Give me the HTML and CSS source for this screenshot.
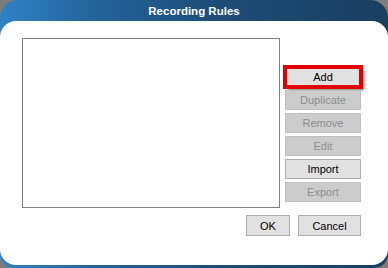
FILE: index.html
```html
<!DOCTYPE html>
<html lang="en">
<head>
    <meta charset="UTF-8">
    <title>Recording Rules</title>
    <link rel="stylesheet" href="styles.css">
</head>
<body>
    <div class="window">
        <div class="title-bar">Recording Rules</div>
        <div class="panel">
            <div class="main-row">
                <div class="rule-list"></div>
                <div class="side-buttons">
                    <button class="btn btn-add">Add</button>
                    <button class="btn" disabled>Duplicate</button>
                    <button class="btn" disabled>Remove</button>
                    <button class="btn" disabled>Edit</button>
                    <button class="btn">Import</button>
                    <button class="btn" disabled>Export</button>
                </div>
            </div>
            <div class="footer">
                <button class="btn btn-ok">OK</button>
                <button class="btn btn-cancel">Cancel</button>
            </div>
        </div>
    </div>
</body>
</html>
```

FILE: styles.css
```css
body {
    margin: 0;
    padding: 0;
    width: 388px;
    height: 268px;
    background: #7c7c7c;
    overflow: hidden;
}
.window {
    width: 388px;
    height: 268px;
    box-sizing: border-box;
    padding-bottom: 3px;
    border-radius: 18px 18px 14px 14px;
    background: linear-gradient(90deg, #2f82c6 0%, #23639a 25%, #1d4d78 55%, #193e60 100%);
    display: flex;
    flex-direction: column;
}
.title-bar {
    height: 21px;
    line-height: 22px;
    text-align: center;
    color: #fff;
    font-family: "Liberation Sans", Arial, sans-serif;
    font-weight: bold;
    font-size: 11.5px;
}
.panel {
    flex: 1;
    background: #fff;
    border-radius: 16px;
    padding: 17px 27px 0 22px;
    font-family: "Liberation Sans", Arial, sans-serif;
    font-size: 11px;
}
.main-row {
    display: flex;
}
.rule-list {
    width: 256px;
    height: 168px;
    border: 1px solid #808080;
    background: #fff;
}
.side-buttons {
    margin-left: 5px;
    padding-top: 29px;
    display: flex;
    flex-direction: column;
    gap: 3px;
}
.btn {
    width: 76px;
    height: 20px;
    padding: 0;
    font-family: "Liberation Sans", Arial, sans-serif;
    font-size: 11px;
    color: #000;
    background: #e1e1e1;
    border: 1px solid #adadad;
}
.btn:disabled {
    color: #8d8d8d;
    background: #cccccc;
    border-color: #bfbfbf;
}
.btn-add {
    border: none;
    box-shadow: inset 0 0 0 2px #e00000, 0 0 0 2px #e00000, 3px 3px 3px rgba(0, 0, 0, 0.6);
}
.footer {
    display: flex;
    justify-content: flex-end;
    gap: 8px;
    margin-top: 7px;
}
.btn-ok {
    width: 44px;
    height: 21px;
}
.btn-cancel {
    width: 63px;
    height: 21px;
}
```
